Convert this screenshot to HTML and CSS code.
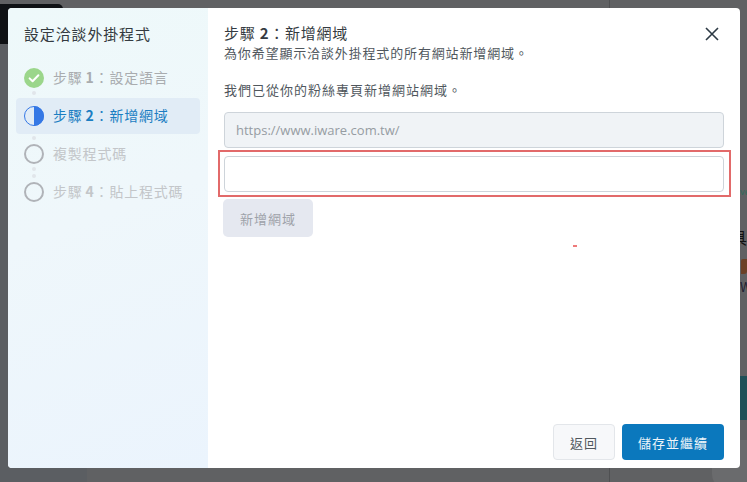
FILE: index.html
```html
<!DOCTYPE html>
<html lang="zh-Hant">
<head>
<meta charset="utf-8">
<title>設定洽談外掛程式</title>
<link rel="stylesheet" href="styles.css">
</head>
<body>
<div class="backdrop">
  <div class="bg-tab"></div>
  <div class="bg-left"></div>
  <div class="bg-line"></div>
  <div class="bg-text">
    <span class="bg-t1">ve</span>
    <span class="bg-t2">具</span>
    <span class="bg-t3">W</span>
  </div>
  <div class="bg-pic"></div>
  <div class="bg-band"></div>
  <div class="bg-fab"></div>
</div>
<main class="modal">
  <aside class="side">
    <h2 class="side-title">設定洽談外掛程式</h2>
    <ol class="steps">
      <li class="step done">
        <svg class="ico" viewBox="0 0 20 20"><circle cx="10" cy="10" r="10" fill="#9bd68b"/><path d="M5.6 10.4l3 2.9 5.8-6" fill="none" stroke="#fff" stroke-width="2" stroke-linecap="round" stroke-linejoin="round"/></svg>
        <span class="label">步驟 <b>1</b>：設定語言</span>
      </li>
      <li class="step active">
        <svg class="ico" viewBox="0 0 20 20"><circle cx="10" cy="10" r="9.5" fill="none" stroke="#3578e5" stroke-width="1"/><path d="M10 0a10 10 0 0 1 0 20z" fill="#3578e5"/></svg>
        <span class="label">步驟 <b>2</b>：新增網域</span>
      </li>
      <li class="step todo">
        <svg class="ico" viewBox="0 0 20 20"><circle cx="10" cy="10" r="9" fill="none" stroke="#b0b3b8" stroke-width="2"/></svg>
        <span class="label">複製程式碼</span>
      </li>
      <li class="step todo">
        <svg class="ico" viewBox="0 0 20 20"><circle cx="10" cy="10" r="9" fill="none" stroke="#b0b3b8" stroke-width="2"/></svg>
        <span class="label">步驟 <b>4</b>：貼上程式碼</span>
      </li>
    </ol>
  </aside>
  <section class="content">
    <button class="close" aria-label="關閉"><svg viewBox="0 0 14 14"><path d="M1 1l12 12M13 1L1 13" fill="none" stroke="#2d3a45" stroke-width="1.6"/></svg></button>
    <h1 class="title">步驟 <b>2</b>：新增網域</h1>
    <p class="desc">為你希望顯示洽談外掛程式的所有網站新增網域。</p>
    <p class="note">我們已從你的粉絲專頁新增網站網域。</p>
    <div class="field field-off">https://www.iware.com.tw/</div>
    <div class="outline"><div class="field"></div></div>
    <button class="add">新增網域</button>
    <div class="speck"></div>
    <footer class="foot">
      <button class="back">返回</button>
      <button class="save">儲存並繼續</button>
    </footer>
  </section>
</main>
</body>
</html>
```
FILE: styles.css
```css
* { box-sizing: border-box; }
html, body { margin: 0; height: 100%; }
body {
  width: 747px; height: 482px; overflow: hidden; position: relative;
  background: #606163;
  font-family: "Noto Sans CJK TC", "Noto Sans", sans-serif;
  font-weight: 400;
  padding: 8px 7px 14px 8px;
}
.backdrop { position: absolute; inset: 0; }
.bg-tab { position: absolute; left: 0; top: 4px; width: 63px; height: 40px; background: #0f1215; border-radius: 0 5px 0 0; }
.bg-left { position: absolute; left: 0; top: 44px; bottom: 0; width: 87px; background: #5b5e62; }
.bg-line { position: absolute; left: 609px; top: 0; bottom: 0; width: 1px; background: #4f5052; }
.bg-band { position: absolute; left: 740px; top: 376px; width: 7px; height: 44px; background: #1f4f57; }
.bg-fab { position: absolute; left: 712px; top: 440px; width: 50px; height: 50px; border-radius: 16px; background: #6a6b6d; }
.bg-pic { position: absolute; left: 741px; top: 259px; width: 6px; height: 15px; background: #6b4026; border-radius: 2px 0 3px 0; }
.bg-text { position: absolute; left: 740px; top: 180px; width: 7px; height: 120px; overflow: hidden; font-size: 16px; color: #111; }
.bg-text span { position: absolute; left: 0; white-space: nowrap; }
.bg-t1 { top: 5px; font-size: 9px; color: #2f6b5a; }
.bg-t2 { top: 45px; margin-left: -9px; }
.bg-t3 { top: 97px; font-size: 13px; color: #223; }
.modal {
  position: relative; display: flex; width: 732px; height: 460px;
  background: #fff; border-radius: 4px; overflow: hidden;
}
.side {
  width: 200px; flex: none; padding: 16px 8px 0;
  background: linear-gradient(160deg, #eef9fa 0%, #eff7fb 45%, #ebf4fd 100%);
}
.side-title { margin: 0 0 0 8px; font-size: 15px; line-height: 20px; font-weight: 400; color: #343b41; letter-spacing: .85px; }
.steps { list-style: none; margin: 16px 0 0; padding: 0; display: flex; flex-direction: column; gap: 2px; }
.step { position: relative; display: flex; align-items: center; gap: 9px; height: 36px; padding-left: 8px; font-size: 14px; border-radius: 4px; letter-spacing: .8px; word-spacing: -1px; }
.label { margin-bottom: 2px; }
.step b { font-weight: 700; }
.step:not(:last-child)::after,
.step:not(:first-child)::before { content: ""; position: absolute; left: 16px; width: 4px; height: 4px; border-radius: 50%; background: #e1e6ea; }
.step:not(:last-child)::after { top: 31px; }
.step:not(:first-child)::before { top: 0; }
.active::before, .active::after { display: none; }
.ico { width: 20px; height: 20px; flex: none; position: relative; z-index: 1; }
.done { color: #a9acaf; }
.active { background: #e1ecf6; color: #1b7ec2; }
.todo { color: #c3c6c9; }
.content { position: relative; flex: 1; display: flex; flex-direction: column; padding: 15px 16px 8px; }
.close { position: absolute; right: 21px; top: 19px; width: 14px; height: 14px; padding: 0; border: 0; background: none; }
.close svg { display: block; width: 14px; height: 14px; }
.title { margin: 0; font-size: 15px; line-height: 20px; font-weight: 400; color: #343b41; letter-spacing: .75px; }
.desc { margin: 0; font-size: 13px; line-height: 20px; color: #50575d; letter-spacing: .85px; }
.note { margin: 17px 0 12px; font-size: 13px; line-height: 20px; color: #50575d; letter-spacing: 1px; }
.field { height: 36px; border: 1px solid #ced4da; border-radius: 4px; background: #fff; padding: 0 11px; font-family: "Open Sans", sans-serif; font-size: 13px; line-height: 34px; color: #969ca2; }
.field-off { background: #f0f3f6; }
.outline { margin: 2px -7px 0 -6px; padding: 4px 5px 3px 4px; border: 2px solid #e26a6a; }
.add { align-self: flex-start; margin: 2px 0 0 -1px; width: 90px; height: 38px; border: 0; border-radius: 5px; background: #e5e8f0; color: #9ea2a9; font: 400 13px "Noto Sans CJK TC", sans-serif; letter-spacing: 1px; }
.speck { position: absolute; left: 365px; top: 237px; width: 4px; height: 2px; background: #ee7a7a; }
.foot { margin-top: auto; display: flex; justify-content: flex-end; gap: 7px; }
.foot button { height: 36px; border-radius: 4px; font: 400 13px "Noto Sans CJK TC", sans-serif; letter-spacing: 1px; }
.back { width: 62px; background: #f7f8fa; border: 1px solid #e3e6ea; color: #50575d; }
.save { width: 102px; background: #0b78bd; border: 0; color: #eef5fa; }
```
